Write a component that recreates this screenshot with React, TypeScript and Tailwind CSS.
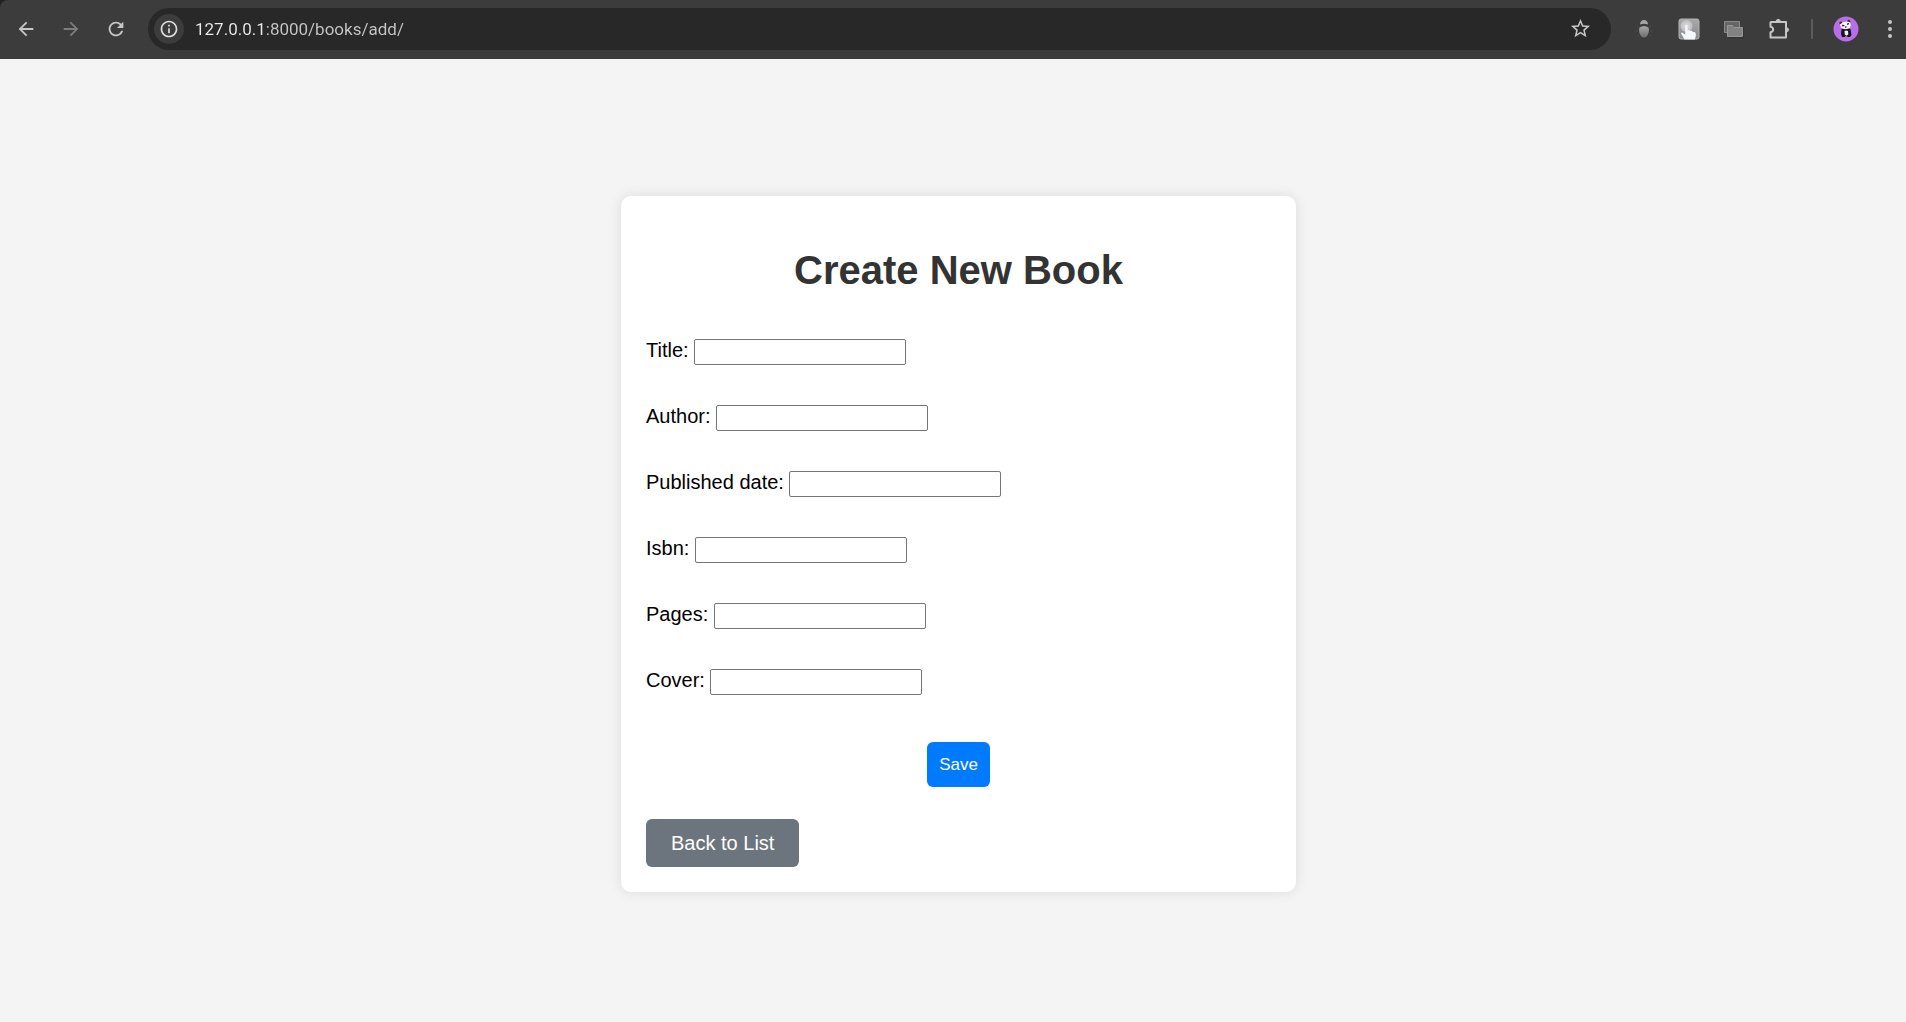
import React from "react";
import { MdArrowBack, MdArrowForward, MdInfoOutline, MdRefresh, MdStarBorder } from "react-icons/md";

const fields = [
  { id: "title", label: "Title:" },
  { id: "author", label: "Author:" },
  { id: "published_date", label: "Published date:" },
  { id: "isbn", label: "Isbn:" },
  { id: "pages", label: "Pages:" },
  { id: "cover", label: "Cover:" },
];

function BarButton({ label, children }: { label: string; children: React.ReactNode }) {
  return (
    <button type="button" aria-label={label} className="flex h-[45px] w-[45px] shrink-0 items-center justify-center">
      {children}
    </button>
  );
}

function BugIcon() {
  return (
    <svg width="20" height="20" viewBox="0 0 20 20" aria-hidden="true">
      <defs>
        <linearGradient id="bug" x1="0" y1="0" x2="0" y2="1">
          <stop offset="0" stopColor="#a8a8a8" />
          <stop offset="1" stopColor="#6e6e6e" />
        </linearGradient>
      </defs>
      <path d="M6 5.500a4 4.500 0 0 1 8 0Q10 3.800 6 5.500Z" fill="#a6a6a6" />
      <path d="M5.500 8.500Q10 5.500 14.500 8.500Q15.500 11 14.500 14Q13 18.500 10 18.500T5.500 14Q4.500 11 5.500 8.500Z" fill="url(#bug)" />
      <path d="M4 8L3 7M3.500 12H2M4.500 16L3.500 17M16 8l1-1M16.500 12H18M15.500 16l1 1" stroke="#555" />
    </svg>
  );
}

function TouchIcon() {
  return (
    <svg width="22" height="22" viewBox="0 0 22 22" aria-hidden="true">
      <defs>
        <linearGradient id="touch" x1="0" y1="0" x2="0" y2="1">
          <stop offset="0" stopColor="#a9a9a9" />
          <stop offset="1" stopColor="#8b8b8b" />
        </linearGradient>
      </defs>
      <rect x="1" y="1" width="20" height="20" rx="2" fill="url(#touch)" stroke="#b4b4b4" />
      <circle cx="8.500" cy="8" r="6" fill="#c4c4c4" />
      <circle cx="8.500" cy="8" r="3.500" fill="#d2d2d2" />
      <path d="M7.200 7.500q1.200-1.500 2.400 0v5l1.500-.5 1.200 1 1.500-.3 1.200 1.200 1.800.1 1 1.500v2.500l-1 3.500H6.500L4.500 18 3 15.500q.2-1.200 1.600-.8l2.600 1.800Z" fill="#f3f8ff" />
    </svg>
  );
}

function FoldersIcon() {
  return (
    <svg width="20" height="18" viewBox="0 0 20 18" aria-hidden="true">
      <path d="M.5 1.500h15v11H.5z" fill="#656565" stroke="#8b8b8b" />
      <path d="M4 6.500h5l1.500 1H20V18H4z" fill="#303030" />
      <path d="M3.500 5.500h5l1 2h9v9h-15z" fill="#828282" stroke="#999" />
    </svg>
  );
}

function PuzzleIcon() {
  return (
    <svg width="22" height="22" viewBox="0 0 22 22" aria-hidden="true">
      <path
        d="M3 4h15v15.500H2.500v-5.300c3.500-.4 3.500-5 0-5.400V4.500Z"
        fill="none"
        stroke="#c7c7c7"
        strokeWidth="2"
        strokeLinejoin="round"
      />
      <path d="M7.700 3.500a2.500 2.500 0 0 1 5 0ZM18.500 9.200a2.500 2.500 0 0 1 0 5Z" fill="#c7c7c7" />
    </svg>
  );
}

function PandaAvatar() {
  return (
    <svg width="26" height="26" viewBox="0 0 26 26" aria-hidden="true">
      <circle cx="13" cy="13" r="12.500" fill="#b76ee6" />
      <path d="M8.500 13Q13 10.500 17.500 13l1 6-1.500 2h-2l-2-1-1.500 1H9l-1-3Z" fill="#18151c" />
      <path d="M11.500 15q2-1 3.500 0l.3 3.500-1.800 1.300-1.700-1.300Z" fill="#f1edf3" />
      <circle cx="7.800" cy="7" r="1.500" fill="#3a2f40" />
      <circle cx="15.800" cy="5.200" r="1.500" fill="#3a2f40" />
      <path d="M7 8.500Q11 4 17 6.200q1.800 3.500-.6 6-5 2.200-8.400-.5Z" fill="#f5f2f6" />
      <path d="m9 9.500 2.300.2M14 8.300l2-.8M12 11.200l1.600-.3" stroke="#211b25" strokeWidth="1.300" />
    </svg>
  );
}

function BrowserBar() {
  return (
    <div className="bg-[#202124]">
      <header className="flex h-[59px] items-center rounded-tl-lg bg-[#3c3c3c] pb-[2px] pl-[3px] text-[#c7c7c7]">
        <BarButton label="Back"><MdArrowBack size={22} /></BarButton>
        <BarButton label="Forward"><MdArrowForward size={22} className="text-[#7d7d7d]" /></BarButton>
        <BarButton label="Reload"><MdRefresh size={22} /></BarButton>
        <div className="mx-[10px] flex h-[42px] min-w-0 flex-1 items-center rounded-full bg-[#282828] pr-[19px] pl-[6px]">
          <button
            type="button"
            aria-label="View site information"
            className="flex h-[30px] w-[30px] shrink-0 items-center justify-center rounded-full bg-[#3c3c3c] text-[#e0e0e0]"
          >
            <MdInfoOutline size={20} />
          </button>
          <input
            aria-label="Address"
            type="text"
            defaultValue="127.0.0.1:8000/books/add/"
            className="ml-[11px] h-[26px] min-w-0 flex-1 bg-linear-to-r from-[#ececec] from-[72px] to-[#c7c7c7] to-[72px] bg-clip-text font-[Roboto,sans-serif] text-[17px] leading-[26px] text-transparent outline-none"
          />
          <button type="button" aria-label="Bookmark this page" className="shrink-0">
            <MdStarBorder size={23} />
          </button>
        </div>
        <BarButton label="Bug extension"><BugIcon /></BarButton>
        <BarButton label="Touch extension"><TouchIcon /></BarButton>
        <BarButton label="Folders extension"><FoldersIcon /></BarButton>
        <BarButton label="Extensions"><PuzzleIcon /></BarButton>
        <span className="mx-[10px] h-5 w-[2px] shrink-0 rounded-full bg-[#5c5c5c]" />
        <BarButton label="Profile"><PandaAvatar /></BarButton>
        <button type="button" aria-label="Menu" className="flex h-[45px] w-[38px] shrink-0 items-center justify-center pl-[6px]">
          <svg width="6" height="20" viewBox="0 0 6 20" fill="currentColor" aria-hidden="true">
            <circle cx="3" cy="3" r="2" />
            <circle cx="3" cy="10" r="2" />
            <circle cx="3" cy="17" r="2" />
          </svg>
        </button>
      </header>
    </div>
  );
}

export default function App() {
  return (
    <div className="flex min-h-screen flex-col bg-[#f4f4f4] font-['Liberation_Sans',Arial,sans-serif] text-xl text-black">
      <BrowserBar />
      <main className="flex flex-1 items-center justify-center pt-[7px] pl-[11px]">
        <section className="w-full max-w-[675px] rounded-[10px] bg-white p-[25px] shadow-[0_0_13px_rgba(0,0,0,0.1)]">
          <h1 className="mt-[26px] text-center text-[40px] leading-[46px] font-bold text-[#333]">Create New Book</h1>
          <form className="mt-[46px]" onSubmit={(e) => e.preventDefault()}>
            <div className="flex flex-col gap-10">
              {fields.map((f) => (
                <div key={f.id} className="flex h-[26px]">
                  <label htmlFor={f.id} className="leading-[22px] whitespace-pre">{f.label + " "}</label>
                  <input
                    id={f.id}
                    name={f.id}
                    type="text"
                    className="w-[212px] rounded-[2px] border border-[#767676] bg-white px-[2px] text-[17px]"
                  />
                </div>
              ))}
            </div>
            <button
              type="submit"
              className="mx-auto mt-[47px] block h-[45px] rounded-md bg-[#007bff] px-3 text-[17px] leading-5 text-white"
            >
              Save
            </button>
          </form>
          <a
            href="#books"
            className="mt-8 inline-block rounded-md bg-[#6c757d] px-[25px] py-3 align-top leading-6 text-white"
          >
            Back to List
          </a>
        </section>
      </main>
    </div>
  );
}
